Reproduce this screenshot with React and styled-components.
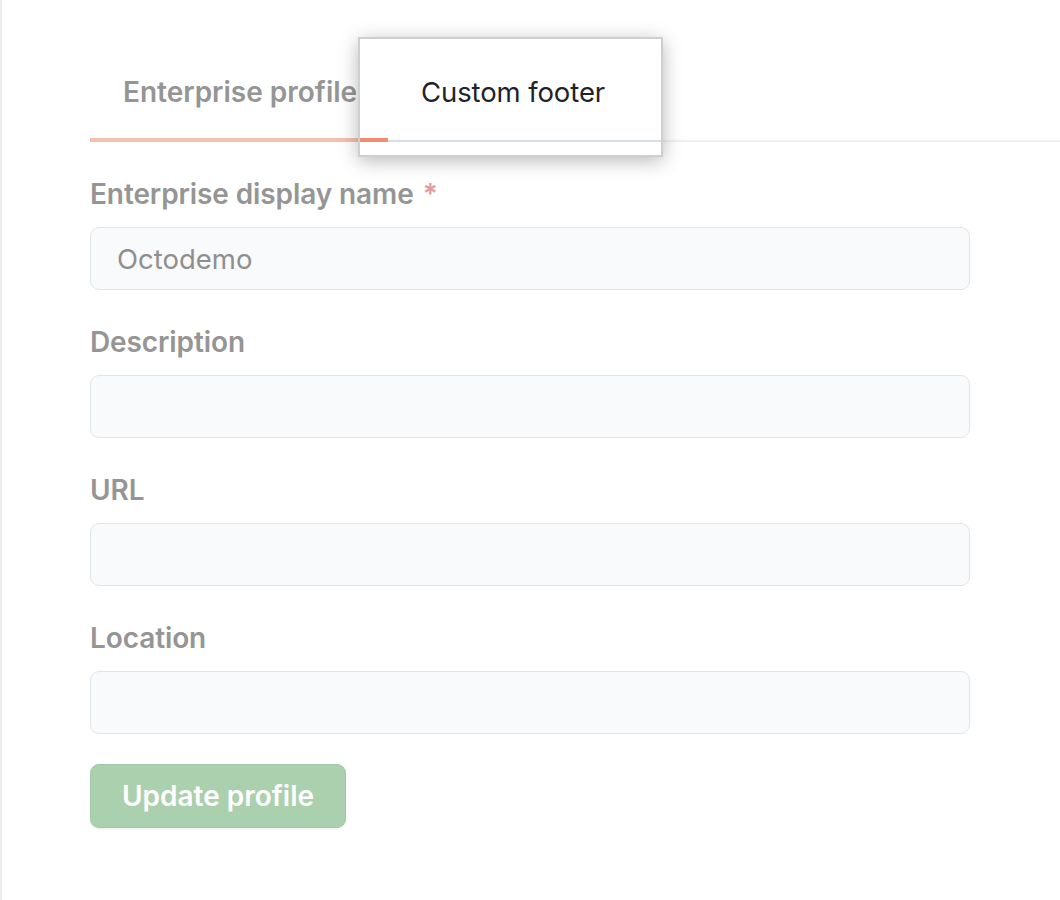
import React from 'react';
import styled, { createGlobalStyle } from 'styled-components';

const GlobalStyle = createGlobalStyle`
  html, body {
    margin: 0;
    background: #ffffff;
  }
  body {
    font-family: Inter, "Noto Sans", "Liberation Sans", sans-serif;
  }
`;

const Page = styled.div`
  position: relative;
  min-height: 900px;
  box-sizing: border-box;
  border-left: 2px solid #e9ecef;
  padding-top: 42px;
  overflow: hidden;
`;

const TabBar = styled.div`
  display: flex;
  margin-left: 88px;
  border-bottom: 2px solid #eef0f2;
`;

const Tab = styled.div`
  display: flex;
  align-items: center;
  box-sizing: border-box;
  height: 100px;
  margin-bottom: -2px;
  padding: 4px 33px 0;
  font-size: ${p => (p.$active ? 28 : 27.5)}px;
  font-weight: ${p => (p.$active ? 600 : 400)};
  color: #959595;
  border-bottom: 4px solid ${p => (p.$active ? '#f5c0b0' : 'transparent')};
`;

/* zoomed callout that shows the un-dimmed tab */
const Callout = styled.div`
  position: absolute;
  left: 356px;
  top: 37px;
  width: 301px;
  height: 116px;
  background: #ffffff;
  border: 2px solid #cfcfcf;
  box-shadow: 0 4px 18px rgba(0, 0, 0, 0.28);
  overflow: hidden;
`;

const CalloutStrip = styled.div`
  display: flex;
  border-bottom: 2px solid #d8dee4;
`;

const CalloutSegment = styled.div`
  display: flex;
  align-items: center;
  flex-shrink: 0;
  box-sizing: border-box;
  height: 103px;
  margin-bottom: -2px;
  padding: 7px ${p => (p.$tail ? 0 : 33)}px 0;
  width: ${p => (p.$tail ? '28px' : 'auto')};
  font-size: 27.5px;
  letter-spacing: -0.1px;
  color: #1f2328;
  border-bottom: 4px solid ${p => (p.$tail ? '#f08d73' : 'transparent')};
`;

const Form = styled.form`
  display: flex;
  flex-direction: column;
  width: 880px;
  margin-left: 88px;
`;

const Field = styled.div`
  display: flex;
  flex-direction: column;
  margin-top: 36px;
`;

const Label = styled.label`
  font-size: 28px;
  line-height: 32px;
  font-weight: 600;
  letter-spacing: -0.1px;
  color: #959595;
  margin-bottom: 17px;
`;

const Required = styled.span`
  color: #e59b9b;
  margin-left: 9px;
`;

const Input = styled.input`
  box-sizing: border-box;
  height: 63px;
  width: 100%;
  padding: 0 26px;
  border: 1px solid #e2e5e8;
  border-radius: 9px;
  background: #f9fafb;
  font-family: inherit;
  font-size: 27.5px;
  color: #8f8f8f;
  outline: none;
`;

const Button = styled.button`
  align-self: flex-start;
  box-sizing: border-box;
  width: 256px;
  height: 64px;
  margin-top: 30px;
  border: 1px solid #a0c8a3;
  border-radius: 9px;
  background: #abd0ad;
  box-shadow: 0 2px 0 rgba(0, 0, 0, 0.04);
  font-family: inherit;
  font-size: 28px;
  font-weight: 600;
  color: #ffffff;
`;

const fields = [
  { label: 'Enterprise display name', value: 'Octodemo', required: true },
  { label: 'Description', value: '' },
  { label: 'URL', value: '' },
  { label: 'Location', value: '' },
];

export default function App() {
  return (
    <>
      <GlobalStyle />
      <Page>
        <TabBar>
          <Tab $active>Enterprise profile</Tab>
          <Tab>Custom footer</Tab>
        </TabBar>

        <Callout>
          <CalloutStrip>
            <CalloutSegment $tail />
            <CalloutSegment>Custom footer</CalloutSegment>
          </CalloutStrip>
        </Callout>

        <Form onSubmit={e => e.preventDefault()}>
          {fields.map(f => (
            <Field key={f.label}>
              <Label>
                {f.label}
                {f.required && <Required>*</Required>}
              </Label>
              <Input defaultValue={f.value} readOnly />
            </Field>
          ))}
          <Button type="submit">Update profile</Button>
        </Form>
      </Page>
    </>
  );
}
